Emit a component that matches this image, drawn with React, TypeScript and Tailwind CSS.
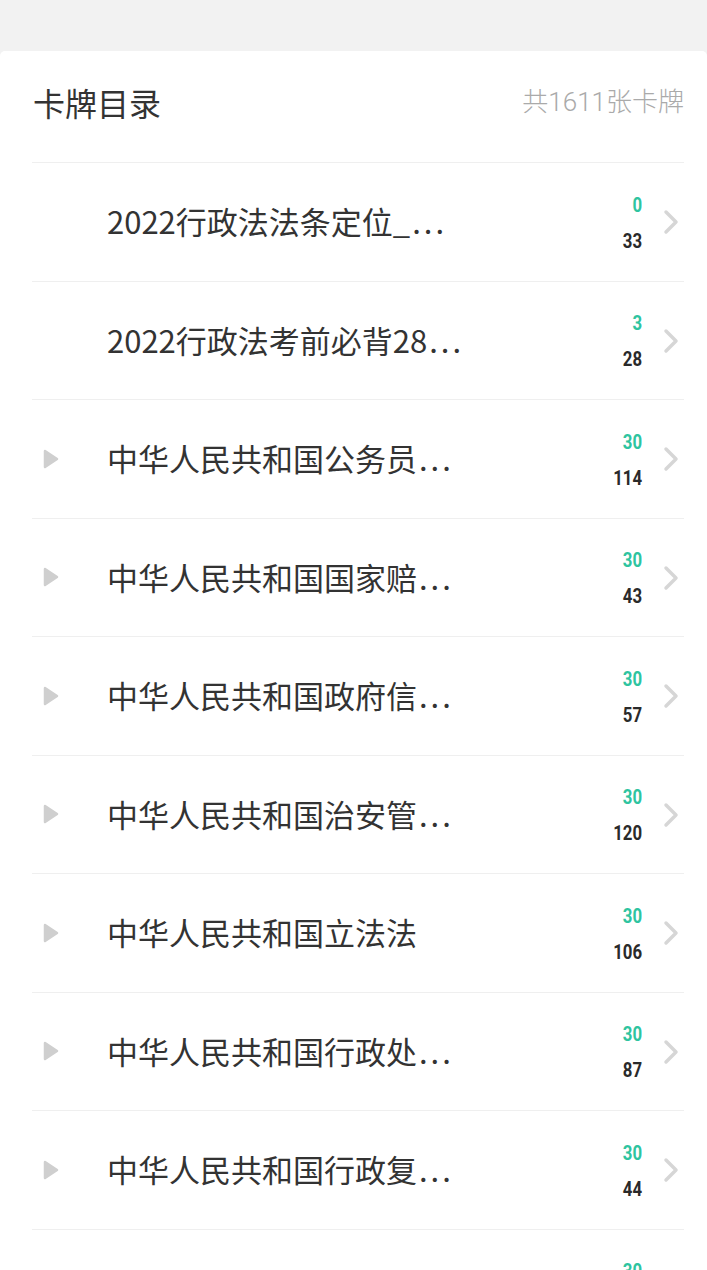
const rows = [
  { title: "2022行政法法条定位_", more: true, done: 0, total: 33, expand: false },
  { title: "2022行政法考前必背28", more: true, done: 3, total: 28, expand: false },
  { title: "中华人民共和国公务员", more: true, done: 30, total: 114, expand: true },
  { title: "中华人民共和国国家赔", more: true, done: 30, total: 43, expand: true },
  { title: "中华人民共和国政府信", more: true, done: 30, total: 57, expand: true },
  { title: "中华人民共和国治安管", more: true, done: 30, total: 120, expand: true },
  { title: "中华人民共和国立法法", more: false, done: 30, total: 106, expand: true },
  { title: "中华人民共和国行政处", more: true, done: 30, total: 87, expand: true },
  { title: "中华人民共和国行政复", more: true, done: 30, total: 44, expand: true },
  { title: "中华人民共和国行政许", more: true, done: 30, total: 52, expand: true },
];

const Triangle = () => (
  <svg width="16" height="20" viewBox="0 0 16 20" className="shrink-0">
    <polygon points="2,2 14,10 2,18" fill="#cfcfcf" stroke="#cfcfcf" strokeWidth="2.5" strokeLinejoin="round" />
  </svg>
);

const Chevron = () => (
  <svg width="18" height="26" viewBox="0 0 18 26" className="shrink-0">
    <path d="M4 3 L14 13 L4 23" fill="none" stroke="#d6d6d6" strokeWidth="3.5" strokeLinecap="round" strokeLinejoin="round" />
  </svg>
);

const Row = ({ item }: any) => (
  <div className="h-[118.5px] border-b border-[#efefef] flex items-center">
    <div className="w-[75px] pl-[11px] flex items-center">
      {item.expand && <Triangle />}
    </div>
    <div className="flex-1 text-[31px] text-[#333] leading-none pb-[2px] font-['Noto_Sans_CJK_SC',sans-serif]">
      {item.title}
      {item.more && <span className="ml-[2px] tracking-[3px]">...</span>}
    </div>
    <div className="flex flex-col items-end mr-[20px] pt-[3px] font-bold text-[21px] leading-none">
      <div className="h-9 flex items-center text-[#2ec4a0] scale-x-80 origin-right">{item.done}</div>
      <div className="h-9 flex items-center text-[#2a2a2a] scale-x-80 origin-right">{item.total}</div>
    </div>
    <div className="pr-[4px] pt-[1px]">
      <Chevron />
    </div>
  </div>
);

export default function App() {
  return (
    <div className="min-h-screen bg-[#f2f2f2] pt-[51px] font-['Roboto','Noto_Sans_CJK_SC',sans-serif]">
      <div className="bg-white rounded-t-[5px] pl-[32px] pr-[23px]">
        <div className="h-[112px] border-b border-[#efefef] flex items-center justify-between pb-[10px]">
          <div className="text-[32px] leading-none text-[#333] pl-[1px] font-['Noto_Sans_CJK_SC',sans-serif]">卡牌目录</div>
          <div className="text-[26px] leading-none text-[#aaa] font-light">共1611张卡牌</div>
        </div>
        {rows.map((r, i) => (
          <Row key={i} item={r} />
        ))}
      </div>
    </div>
  );
}
